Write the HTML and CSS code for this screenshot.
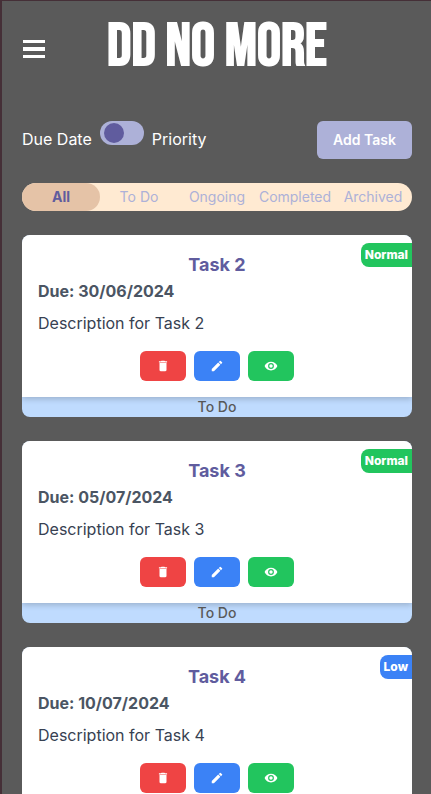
FILE: index.html
```html
<!DOCTYPE html>
<html lang="en">
<head>
<meta charset="utf-8">
<meta name="viewport" content="width=device-width, initial-scale=1">
<title>DD No More</title>
<link rel="stylesheet" href="styles.css">
</head>
<body>
<svg class="sprite" aria-hidden="true">
  <symbol id="trash" viewBox="0 0 24 24"><path d="M6 19c0 1.100.9 2 2 2h8c1.100 0 2-.9 2-2V7H6v12zM19 4h-3.500l-1-1h-5l-1 1H5v2h14V4z"/></symbol>
  <symbol id="pencil" viewBox="0 0 24 24"><path d="M3 17.250V21h3.750L17.810 9.940l-3.750-3.750L3 17.250zM20.710 7.040a1 1 0 0 0 0-1.410l-2.340-2.340a1 1 0 0 0-1.410 0l-1.830 1.830 3.750 3.750 1.830-1.830z"/></symbol>
  <symbol id="eye" viewBox="0 0 24 24"><path d="M12 4.500C7 4.500 2.730 7.610 1 12c1.730 4.390 6 7.500 11 7.500s9.270-3.110 11-7.500c-1.730-4.390-6-7.500-11-7.500zM12 17a5 5 0 1 1 0-10 5 5 0 0 1 0 10zm0-8a3 3 0 1 0 0 6 3 3 0 0 0 0-6z"/></symbol>
</svg>
<header class="header">
  <button class="menu" aria-label="Open menu"><svg viewBox="0 0 22 20"><path d="M0 1h22v3H0zM0 8h22v4H0zM0 16h22v3H0z"/></svg></button>
  <h1 class="brand">DD NO MORE</h1>
</header>
<main>
  <div class="toolbar">
    <div class="sort">
      <label for="sort">Due Date</label>
      <input class="switch" id="sort" type="checkbox" role="switch">
      <label for="sort">Priority</label>
    </div>
    <button class="add">Add Task</button>
  </div>
  <nav class="tabs">
    <button class="tab active">All</button>
    <button class="tab">To Do</button>
    <button class="tab">Ongoing</button>
    <button class="tab">Completed</button>
    <button class="tab">Archived</button>
  </nav>
  <div class="tasks">
    <article class="task">
      <div class="card">
        <span class="badge normal">Normal</span>
        <h2>Task 2</h2>
        <p class="due">Due: 30/06/2024</p>
        <p class="description">Description for Task 2</p>
        <div class="actions">
          <button class="delete" aria-label="Delete"><svg><use href="#trash"/></svg></button>
          <button class="edit" aria-label="Edit"><svg><use href="#pencil"/></svg></button>
          <button class="view" aria-label="View"><svg><use href="#eye"/></svg></button>
        </div>
      </div>
      <div class="status">To Do</div>
    </article>
    <article class="task">
      <div class="card">
        <span class="badge normal">Normal</span>
        <h2>Task 3</h2>
        <p class="due">Due: 05/07/2024</p>
        <p class="description">Description for Task 3</p>
        <div class="actions">
          <button class="delete" aria-label="Delete"><svg><use href="#trash"/></svg></button>
          <button class="edit" aria-label="Edit"><svg><use href="#pencil"/></svg></button>
          <button class="view" aria-label="View"><svg><use href="#eye"/></svg></button>
        </div>
      </div>
      <div class="status">To Do</div>
    </article>
    <article class="task">
      <div class="card">
        <span class="badge low">Low</span>
        <h2>Task 4</h2>
        <p class="due">Due: 10/07/2024</p>
        <p class="description">Description for Task 4</p>
        <div class="actions">
          <button class="delete" aria-label="Delete"><svg><use href="#trash"/></svg></button>
          <button class="edit" aria-label="Edit"><svg><use href="#pencil"/></svg></button>
          <button class="view" aria-label="View"><svg><use href="#eye"/></svg></button>
        </div>
      </div>
    </article>
  </div>
</main>
</body>
</html>
```
FILE: styles.css
```css
* { box-sizing: border-box; }
html { scrollbar-width: none; }
body {
  margin: 0;
  padding: 0 19px 0 20px;
  border-top: 1px solid #452f37;
  border-left: 2px solid #452f37;
  background: #5a5a5a;
  color: #fff;
  font: 16px/24px Inter, sans-serif;
}
h1, h2, p { margin: 0; }
button { padding: 0; border: 0; font: inherit; color: inherit; cursor: pointer; }
svg { display: block; fill: currentColor; }
.sprite { position: absolute; width: 0; height: 0; }
.header {
  display: grid;
  grid-template-columns: 24px 1fr 24px;
  align-items: center;
  height: 96px;
}
.menu { padding: 0 1px; background: none; }
.menu svg { width: 22px; height: 20px; }
.brand {
  padding-bottom: 4px;
  text-align: center;
  white-space: nowrap;
  font: bold 60px/80px "Bebas Neue", "Liberation Sans Narrow", "Roboto Condensed", sans-serif;
}
.toolbar { display: flex; justify-content: space-between; margin-top: 24px; }
.sort { display: flex; gap: 8px; }
.sort label { padding-top: 6px; }
.switch {
  appearance: none;
  width: 44px;
  height: 24px;
  margin: 0;
  padding: 2px 4px;
  border-radius: 12px;
  background: #adb1d8;
}
.switch::before {
  content: "";
  display: block;
  width: 20px;
  height: 20px;
  border-radius: 50%;
  background: #605c9e;
}
.switch:checked::before { margin-left: auto; }
.add {
  padding: 0 16px;
  height: 38px;
  border-radius: 6px;
  background: #adb1d8;
  font-size: 14px;
  font-weight: 600;
}
.tabs {
  display: grid;
  grid-template-columns: repeat(5, minmax(0, 1fr));
  margin-top: 24px;
  border-radius: 14px;
  background: #ffead2;
}
.tab {
  height: 28px;
  border-radius: 14px;
  background: none;
  color: #adb1d8;
  font-size: 14px;
  font-weight: 400;
}
.tab.active { background: #e5c3a7; color: #605c9e; font-weight: 700; }
.tasks { display: grid; gap: 24px; margin-top: 24px; }
.task {
  border-radius: 8px;
  overflow: hidden;
  background: #bfdbfe;
}
.card {
  position: relative;
  padding: 16px;
  background: #fff;
  box-shadow: 0 2px 6px rgb(0 0 0 / 20%);
}
.card h2 { color: #605c9e; font-size: 18px; line-height: 28px; font-weight: 700; text-align: center; }
.due { color: #4b5563; font-weight: 700; }
.description { margin-top: 8px; color: #374151; }
.badge {
  position: absolute;
  top: 8px;
  right: 0;
  padding: 0 4px;
  border-radius: 8px 0 0 8px;
  font-size: 12px;
  font-weight: 800;
}
.normal { background: #22c55e; }
.low { background: #3b82f6; }
.actions { display: flex; justify-content: center; gap: 8px; margin-top: 16px; }
.actions button {
  display: grid;
  place-items: center;
  width: 46px;
  height: 30px;
  border-radius: 6px;
}
.actions svg { width: 14px; height: 14px; }
.delete { background: #ef4444; }
.edit { background: #3b82f6; }
.view { background: #22c55e; }
.status { color: #5a5a5a; font-size: 14px; line-height: 20px; font-weight: 500; text-align: center; }
```
